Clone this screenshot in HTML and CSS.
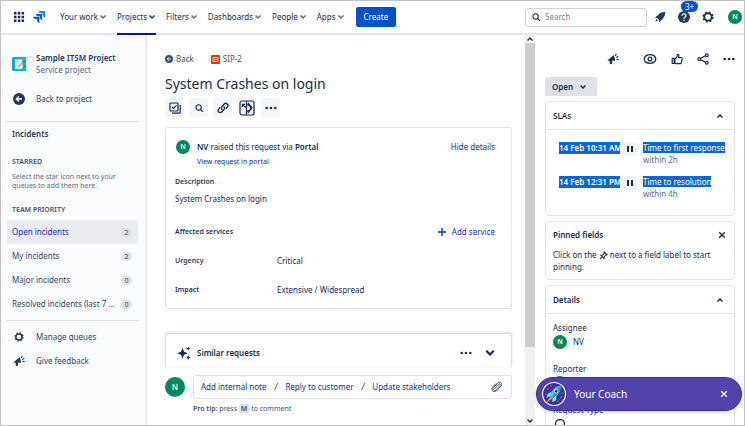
FILE: index.html
```html
<!DOCTYPE html>
<html lang="en">
<head>
<meta charset="utf-8">
<title>SIP-2 System Crashes on login</title>
<link rel="stylesheet" href="styles.css">
</head>
<body>
<svg class="sprite" aria-hidden="true">
  <symbol id="chev" viewBox="0 0 8 8"><path d="M1.5 2.5 4 5l2.500-2.500" fill="none" stroke="currentColor" stroke-width="1.500"/></symbol>
  <symbol id="chev-up" viewBox="0 0 8 8"><path d="M1.500 5.500 4 3l2.500 2.500" fill="none" stroke="currentColor" stroke-width="1.500"/></symbol>
  <symbol id="dots" viewBox="0 0 12 12"><g fill="currentColor"><circle cx="1.700" cy="6" r="1.300"/><circle cx="6" cy="6" r="1.300"/><circle cx="10.300" cy="6" r="1.300"/></g></symbol>
  <symbol id="search" viewBox="0 0 12 12"><g fill="none" stroke="currentColor" stroke-width="1.300"><circle cx="5.500" cy="5.300" r="3.200"/><path d="m8 8 2.700 2.700"/></g></symbol>
  <symbol id="gear" viewBox="0 0 12 12"><circle cx="6" cy="6" r="3.700" fill="none" stroke="currentColor" stroke-width="1.800"/><circle cx="6" cy="6" r="4.900" fill="none" stroke="currentColor" stroke-width="1.400" stroke-dasharray="2 1.850"/></symbol>
  <symbol id="horn" viewBox="0 0 12 12"><path d="M.3 7.400 6.800 2l1.500 5.800-3.200-.4-.3 3.900-2-.5-.2-3z" fill="currentColor"/><path d="m8.300 3 1-2M9.300 4.500l2-1.200M9.500 6.300l2.200.3" stroke="currentColor" stroke-width="1.200" fill="none"/></symbol>
  <symbol id="back" viewBox="0 0 12 12"><circle cx="6" cy="6" r="6" fill="currentColor"/><path d="M9 6H3.500M5.800 3.500 3.300 6l2.500 2.500" stroke="#fff" stroke-width="1.300" fill="none"/></symbol>
  <symbol id="close" viewBox="0 0 8 8"><path d="m1.200 1.200 5.600 5.600m0-5.600L1.200 6.800" stroke="currentColor" stroke-width="1.400"/></symbol>
</svg>
<div class="app">
  <header class="top">
    <button class="bare" aria-label="Switch apps"><svg class="i12" viewBox="0 0 12 12"><path d="M1 1h2.500v2.500H1zM4.800 1h2.500v2.500H4.800zM8.600 1h2.500v2.500H8.600zM1 4.800h2.500v2.500H1zM4.800 4.800h2.500v2.500H4.800zM8.600 4.800h2.500v2.500H8.600zM1 8.600h2.500v2.500H1zM4.800 8.600h2.500v2.500H4.800zM8.600 8.600h2.500v2.500H8.600z" fill="#172b4d"/></svg></button>
    <a class="logo" href="#" aria-label="Home"><svg class="i12" viewBox="0 0 12 12"><path d="M5.600 0H12v6.400a2.700 2.700 0 0 1-2.300-2.700V2.300H8.300A2.700 2.700 0 0 1 5.600 0z" fill="#2684ff"/><path d="M2.800 2.900h6.400v6.400a2.700 2.700 0 0 1-2.300-2.700V5.200H5.500a2.700 2.700 0 0 1-2.700-2.300z" fill="#0f5fe0"/><path d="M0 5.700h6.400V12a2.700 2.700 0 0 1-2.300-2.700V8H2.700A2.700 2.700 0 0 1 0 5.700z" fill="#0052cc"/></svg></a>
    <nav class="nav">
      <a href="#">Your work<svg class="i8"><use href="#chev"/></svg></a>
      <a href="#" class="on">Projects<svg class="i8"><use href="#chev"/></svg></a>
      <a href="#">Filters<svg class="i8"><use href="#chev"/></svg></a>
      <a href="#">Dashboards<svg class="i8"><use href="#chev"/></svg></a>
      <a href="#">People<svg class="i8"><use href="#chev"/></svg></a>
      <a href="#">Apps<svg class="i8"><use href="#chev"/></svg></a>
    </nav>
    <button class="create">Create</button>
    <label class="search"><svg class="i10"><use href="#search"/></svg><input type="search" placeholder="Search" aria-label="Search"></label>
    <div class="tools">
      <button class="bare" aria-label="Notifications"><svg class="i12" viewBox="0 0 12 12"><path d="M11.200 1C8 .8 5.500 2 3.900 4.200L.9 6.500l2.500.7L5 9l.5 2.200 2.700-3C10.300 6.500 11.300 4 11.200 1zM2.500 8 1.300 10.700 4 9.500z" fill="#253858"/></svg></button>
      <button class="bare help" aria-label="Help"><svg class="i12" viewBox="0 0 12 12"><circle cx="6" cy="6" r="6" fill="#253858"/><path d="M4 4.800c0-2.500 4-2.500 4 0C8 6.200 6 6 6 7.700M6 8.700v1.300" fill="none" stroke="#fff" stroke-width="1.200"/></svg><span class="badge">3+</span></button>
      <button class="bare" aria-label="Settings"><svg class="i12"><use href="#gear"/></svg></button>
      <button class="avatar" aria-label="Profile">N</button>
    </div>
  </header>

  <aside class="side">
    <div class="project">
      <svg class="i14" viewBox="0 0 14 14"><rect width="14" height="14" rx="1" fill="#00b3d7"/><path d="M3 2.500h7.500v9.300H3z" fill="#fff"/><path d="M4 4.500h4M4 6.300h3M4 8.200h2M4 10h4" stroke="#b3bac5" stroke-width=".6"/><path d="m10.800 3.200 1.200.8-4.500 6-1.500.8.300-1.700z" fill="#ff9c1a"/><path d="m10.800 3.200 1.200.8-.8 1-1.200-.8z" fill="#de350b"/></svg>
      <div><h2>Sample ITSM Project</h2><p>Service project</p></div>
    </div>
    <a class="side-link" href="#"><svg class="i12"><use href="#back"/></svg>Back to project</a>
    <hr>
    <h3>Incidents</h3>
    <h4>Starred</h4>
    <p class="hint">Select the star icon next to your queues to add them here.</p>
    <h4>Team priority</h4>
    <ul class="queues">
      <li><a href="#" class="on"><span>Open incidents</span><b>2</b></a></li>
      <li><a href="#"><span>My incidents</span><b>2</b></a></li>
      <li><a href="#"><span>Major incidents</span><b>0</b></a></li>
      <li><a href="#"><span>Resolved incidents (last 7 ...</span><b>0</b></a></li>
    </ul>
    <hr>
    <a class="side-link" href="#"><svg class="i10"><use href="#gear"/></svg>Manage queues</a>
    <a class="side-link" href="#"><svg class="i12"><use href="#horn"/></svg>Give feedback</a>
  </aside>

  <main class="main">
    <nav class="crumbs">
      <a href="#"><svg class="i8"><use href="#back"/></svg>Back</a>
      <a href="#" class="key"><svg class="i9" viewBox="0 0 9 9"><rect width="9" height="9" rx="1" fill="#de350b"/><path d="M2 2.500h5v4H2zM3 5.300l1.200-1.300.8.900L6 4" fill="none" stroke="#fff" stroke-width=".8"/></svg>SIP-2</a>
    </nav>
    <h1>System Crashes on login</h1>
    <div class="actions">
      <button aria-label="Create subtask"><svg class="i12" viewBox="0 0 12 12"><g fill="none" stroke="currentColor" stroke-width="1.200"><rect x="1" y="1" width="8" height="8" rx="1"/><path d="m3 4.800 1.500 1.600L7.500 3.300M3 11.200h7.200q1 0 1-1V3"/></g></svg></button>
      <button aria-label="Find similar"><svg class="i10"><use href="#search"/></svg></button>
      <button aria-label="Link issue"><svg class="i12" viewBox="0 0 12 12"><g fill="none" stroke="currentColor" stroke-width="1.300" stroke-linecap="round"><path d="M5 7.300A2.100 2.100 0 0 1 5 4.500L7.300 2a2.100 2.100 0 0 1 3 3L9.200 6.200"/><path d="M7 4.700a2.100 2.100 0 0 1 0 2.800L4.700 10a2.100 2.100 0 0 1-3-3l1.100-1.200"/></g></svg></button>
      <button aria-label="Add form"><svg class="i16" viewBox="0 0 16 16"><g fill="none" stroke="currentColor" stroke-width="1.200"><rect x="1" y="1" width="14" height="14" rx="2"/><path d="M7.500 1v4M7.500 11v4M7.500 5v6c5.500.8 5.500-6.800 0-6M3 4.500 7.500 8M3.300 7V4.300H6M9 3l4 4.800L9 13"/></g></svg></button>
      <button aria-label="More actions"><svg class="i12"><use href="#dots"/></svg></button>
    </div>

    <section class="card request">
      <div class="raised">
        <span class="avatar">N</span>
        <div class="who"><p><b>NV</b> raised this request via <b>Portal</b></p><a href="#">View request in portal</a></div>
        <button class="text-btn">Hide details</button>
      </div>
      <h5>Description</h5>
      <p class="desc">System Crashes on login</p>
      <div class="services"><h5>Affected services</h5><button class="text-btn"><svg class="i10" viewBox="0 0 10 10"><path d="M5 1v8M1 5h8" stroke="currentColor" stroke-width="1.400"/></svg>Add service</button></div>
      <dl><dt>Urgency</dt><dd>Critical</dd><dt>Impact</dt><dd>Extensive / Widespread</dd></dl>
    </section>

    <section class="similar">
      <svg class="i14" viewBox="0 0 14 14"><path d="M5.500 1.800 7 5.700 10.800 7.200 7 8.700l-1.500 3.900L4 8.700.2 7.200 4 5.700zM11.300.3l.7 1.600 1.700.7-1.700.7-.7 1.600-.7-1.600-1.600-.7 1.600-.7zM11.300 9.300l.7 1.500 1.500.7-1.500.7-.7 1.500-.7-1.500-1.500-.7 1.500-.7z" fill="currentColor"/></svg>
      <h2>Similar requests</h2>
      <button class="bare" aria-label="More"><svg class="i12"><use href="#dots"/></svg></button>
      <button class="bare" aria-label="Expand"><svg class="i12"><use href="#chev"/></svg></button>
    </section>

    <section class="reply">
      <span class="avatar big">N</span>
      <div class="box">
        <a href="#">Add internal note</a><i>/</i><a href="#">Reply to customer</a><i>/</i><a href="#">Update stakeholders</a>
        <button class="bare" aria-label="Attach file"><svg class="i12" viewBox="0 0 12 12"><path d="m3.500 7.500 4-4.300c1.200-1.100 2.400.2 1.400 1.300L5 8.800c-1.800 1.700-4-.3-2.400-2.200L6.800 2c2.500-2.300 5.300.7 3.200 3L5.900 9.600C3.300 12.300-.8 9.200 1.500 6.300L5 2.500" fill="none" stroke="#42526e" stroke-width="1"/></svg></button>
      </div>
      <p class="tip"><b>Pro tip:</b> press <kbd>M</kbd> to comment</p>
    </section>
  </main>

  <div class="scroll" aria-hidden="true">
    <svg class="i8"><use href="#chev-up"/></svg><span></span><svg class="i8"><use href="#chev"/></svg>
  </div>

  <aside class="detail">
    <div class="icons">
      <button class="bare horn" aria-label="Feedback"><svg class="i12"><use href="#horn"/></svg></button>
      <button class="bare" aria-label="Watch"><svg class="i14" viewBox="0 0 14 14"><g fill="none" stroke="currentColor" stroke-width="1.300"><ellipse cx="7" cy="7" rx="5.800" ry="4.400"/><circle cx="7" cy="7" r="1.900"/></g></svg></button>
      <button class="bare" aria-label="Like"><svg class="i12" viewBox="0 0 12 12"><path d="M1.200 5.300h2v5.200h-2zM3.800 10V6L6 4l.3-2.500c1.500-.6 2 .8 1.300 3h2.700q1 .2.800 1.300l-.8 4q-.2.800-1 .8H5z" fill="none" stroke="currentColor" stroke-width="1.200" stroke-linejoin="round"/></svg></button>
      <button class="bare" aria-label="Share"><svg class="i12" viewBox="0 0 12 12"><g fill="none" stroke="currentColor" stroke-width="1.200"><circle cx="2.200" cy="6" r="1.400"/><circle cx="9.800" cy="2.200" r="1.400"/><circle cx="9.800" cy="9.800" r="1.400"/><path d="m3.500 5.400 5-2.600M3.500 6.600l5 2.600"/></g></svg></button>
      <button class="bare" aria-label="More"><svg class="i12"><use href="#dots"/></svg></button>
    </div>
    <button class="status">Open<svg class="i8"><use href="#chev"/></svg></button>

    <section class="card">
      <h2 class="head">SLAs<button class="bare" aria-label="Collapse SLAs"><svg class="i8"><use href="#chev-up"/></svg></button></h2>
      <ul class="slas">
        <li><mark class="due">14 Feb 10:31 AM</mark><span class="pause"></span><p><mark>Time to first response</mark><br>within 2h</p></li>
        <li><mark class="due">14 Feb 12:31 PM</mark><span class="pause"></span><p><mark>Time to resolution</mark><br>within 4h</p></li>
      </ul>
    </section>

    <section class="card pinned">
      <h2>Pinned fields<button class="bare" aria-label="Dismiss"><svg class="i8"><use href="#close"/></svg></button></h2>
      <p>Click on the <svg class="i9" viewBox="0 0 10 10"><path d="m5.800 1 3.200 3.200-1.400.4-1.700 1.700-.3 2L2 4.700l2-.3 1.700-1.700zM3.700 6.300 1 9" fill="none" stroke="currentColor" stroke-width="1.200"/></svg> next to a field label to start pinning.</p>
    </section>

    <section class="card details">
      <h2 class="head">Details<button class="bare" aria-label="Collapse details"><svg class="i8"><use href="#chev-up"/></svg></button></h2>
      <dl>
        <dt>Assignee</dt><dd><span class="avatar">N</span>NV</dd>
        <dt>Reporter</dt><dd><span class="avatar">N</span>NV</dd>
        <dt>Request Type</dt><dd><svg class="i14" viewBox="0 0 14 14"><circle cx="7" cy="7" r="4.500" fill="none" stroke="currentColor" stroke-width="1.300"/></svg></dd>
      </dl>
    </section>
  </aside>

  <div class="coach">
    <svg class="i26" viewBox="0 0 26 26"><circle cx="13" cy="13" r="11.500" fill="#403294" stroke="#fff" stroke-width="1.200"/><g fill="#c0b6f2"><circle cx="7" cy="8" r=".6"/><circle cx="10" cy="5" r=".5"/><circle cx="20" cy="16" r=".6"/><circle cx="17" cy="20" r=".6"/><circle cx="5" cy="13" r=".5"/><circle cx="21" cy="12" r=".5"/></g><path d="M20 4.500c-4.500.3-8 3-9.700 7.500L9 16.500l2.500 1.200C16.500 15.500 20 10 20 4.500z" fill="#4fc3d9"/><path d="M20 4.500C15 8 12 12 11.500 17.700 16.500 15.500 20 10 20 4.500z" fill="#1d9fc0"/><path d="M10.700 10.500 6.500 13 5.500 17l4-2zM15.500 14.500l-.5 5-4 1.500.7-3.500z" fill="#79e2f2"/><path d="m9 16.500-3.500 5 5.500-3.700z" fill="#ffc400"/><circle cx="15.200" cy="10.200" r="1.900" fill="#253858" stroke="#fff" stroke-width=".8"/></svg>
    <span>Your Coach</span>
    <button class="bare" aria-label="Close coach"><svg class="i8"><use href="#close"/></svg></button>
  </div>
</div>
</body>
</html>
```
FILE: styles.css
```css
* { box-sizing: border-box; }
body { margin: 0; font: 8px/12px "Noto Sans", "Open Sans", sans-serif; color: #172b4d; background: #fff; }
h1, h2, h3, h4, h5, p, ul, dl, dd { margin: 0; padding: 0; }
h2, h3, h4, h5 { font-size: 8px; font-weight: 600; }
ul { list-style: none; }
a { color: inherit; text-decoration: none; }
b { font-weight: 600; }
svg { flex: none; display: block; }
button { font: inherit; color: inherit; border: 0; padding: 0; cursor: pointer; }
.bare, .text-btn { background: none; }
.sprite { position: absolute; width: 0; height: 0; }
.i8 { width: 8px; height: 8px; }
.i9 { width: 9px; height: 9px; }
.i10 { width: 10px; height: 10px; }
.i12 { width: 12px; height: 12px; }
.i14 { width: 14px; height: 14px; }
.i16 { width: 16px; height: 16px; }
.i26 { width: 26px; height: 26px; }

.app {
  position: relative;
  display: grid;
  grid-template: 34px minmax(0, 1fr) / 146px minmax(0, 1fr) 10px 209px;
  height: 100vh;
  border: 1px solid #c1c1c1;
  overflow: hidden;
}

.top { grid-column: 1 / -1; display: flex; align-items: center; padding: 0 2px 0 12px; border-bottom: 2px solid #e4e6ec; }
.logo { margin: 0 15px 0 8px; }
.nav { display: flex; align-self: stretch; gap: 10px; margin-bottom: -2px; }
.nav a { display: flex; align-items: center; gap: 1px; border-bottom: 2px solid transparent; }
.nav svg { color: #5e6c84; }
.nav .on { color: #0c2fa8; border-color: #0a1a9c; }
.nav .on svg { color: inherit; }
.create { height: 20px; padding: 0 8px; margin-left: 11px; border-radius: 2px; background: #0052cc; color: #fff; }
.search { display: flex; align-items: center; gap: 4px; width: 122px; height: 19px; margin-left: auto; padding: 0 5px; border: 1px solid #ccd0d9; border-radius: 3px; }
.search input { width: 100%; min-width: 0; padding: 0; border: 0; outline: 0; background: none; font: inherit; }
.search input::placeholder { color: #7a869a; }
.tools { display: flex; align-items: center; gap: 12px; margin-left: 7px; }
.help { position: relative; }
.badge { position: absolute; left: 3px; top: -10px; padding: 0 4px; border-radius: 6px; background: #0052cc; color: #fff; font-size: 8px; line-height: 11px; }
.avatar { flex: none; display: grid; place-items: center; width: 14px; height: 14px; border-radius: 50%; background: #00875a; color: #fff; font-size: 7px; font-weight: 600; }
.tools .avatar { margin-left: 2px; }
.avatar.big { width: 20px; height: 20px; font-size: 8px; }

.side { padding: 17px 6px 0 5px; border-right: 2px solid #ebecf0; background: #fafbfc; color: #344563; }
.side h2, .side h3 { color: #253858; }
.side hr { margin: 10px 0 6px; border: 0; border-top: 1px solid #dfe1e6; }
.project { display: flex; align-items: center; gap: 10px; padding-left: 6px; margin-bottom: 12px; }
.project p { color: #5e6c84; line-height: 11px; }
.side-link { display: grid; grid-template-columns: 14px 1fr; align-items: center; justify-items: start; gap: 10px; height: 24px; padding-left: 6px; }
.side-link svg { justify-self: center; color: #253858; }
.side h3, .side h4, .hint { padding-left: 6px; }
.side h4 { margin-top: 16px; font-size: 7px; line-height: 12px; text-transform: uppercase; color: #42526e; }
.hint { margin-top: 4px; font-size: 7px; line-height: 9px; color: #5e6c84; }
.hint + h4 { margin-top: 14px; }
.queues { margin: 4px 1px 0; }
.queues a { display: flex; align-items: center; justify-content: space-between; height: 24px; padding: 0 6px 0 5px; border-radius: 2px; }
.queues .on { background: #ebecf0; color: #0c2fa8; }
.queues b { min-width: 11px; border-radius: 5px; background: #dfe1e6; color: #344563; font-size: 7px; font-weight: 400; line-height: 9px; text-align: center; }
.queues + hr { margin: 4px 0; }

.main { display: flex; flex-direction: column; padding: 18px 13px 0 18px; overflow: hidden; }
.crumbs { display: flex; gap: 17px; color: #42526e; }
.crumbs a { display: flex; align-items: center; gap: 3px; }
h1 { margin-top: 9px; font-size: 14px; line-height: 20px; font-weight: 400; }
.actions { display: flex; gap: 5px; margin-top: 4px; }
.actions button { display: grid; place-items: center; width: 19px; height: 19px; border-radius: 2px; background: #f4f5f7; }
.card { border: 1px solid #e2e4e9; border-radius: 3px; }
.request { margin-top: 10px; padding: 12px 16px 12px 9px; }
.raised { display: flex; align-items: flex-start; gap: 7px; padding-left: 1px; line-height: 14px; }
.who { flex: 1; }
.who a { display: block; font-size: 7px; line-height: 16px; color: #0c2fa8; }
.text-btn { display: flex; align-items: center; gap: 5px; line-height: 14px; color: #0c2fa8; }
h5 { font-size: 7px; line-height: 12px; color: #253858; }
.request > h5 { margin-top: 6px; }
.desc { margin-top: 5px; }
.services { display: flex; align-items: center; justify-content: space-between; margin-top: 20px; }
.request dl { display: grid; grid-template-columns: 102px 1fr; row-gap: 17px; margin-top: 16px; }
.request dt { font-size: 7px; font-weight: 600; color: #253858; }
.similar { display: flex; align-items: center; gap: 12px; height: 34px; margin-top: 24px; padding: 4px 15px 0 11px; border: 1px solid #dcd9f2; border-bottom: 0; border-radius: 3px 3px 0 0; box-shadow: 0 -1px 3px #dcd9f2; }
.similar h2 { flex: 1; margin-left: -6px; }
.reply { display: grid; grid-template-columns: 20px 1fr; align-items: center; column-gap: 8px; margin-top: 8px; }
.box { display: flex; align-items: center; gap: 8px; height: 24px; padding: 0 8px 0 7px; border: 1px solid #dfe1e6; border-radius: 3px; color: #0c2fa8; }
.box i { color: #172b4d; }
.box button { margin-left: auto; }
.tip { grid-column: 2; margin-top: 4px; font-size: 7px; color: #42526e; }
kbd { padding: 0 2px; border-radius: 2px; background: #dfe1e6; font: inherit; font-weight: 600; }

.scroll { display: flex; flex-direction: column; justify-content: space-between; align-items: center; background: #f0f0f0; color: #333; }
.scroll span { flex: none; width: 100%; height: 78%; margin-bottom: auto; background: #cdcdcd; }

.detail { padding: 17px 9px 0 10px; overflow: hidden; }
.icons { display: flex; justify-content: flex-end; align-items: center; gap: 14px; height: 14px; }
.icons .horn { margin-right: 10px; }
.status { display: flex; align-items: center; gap: 6px; height: 19px; margin: 11px 0 5px; padding: 0 10px 0 7px; border-radius: 2px; background: #dfe1e6; font-weight: 600; }
.detail .card { margin-bottom: 5px; }
.detail h2 { display: flex; align-items: center; justify-content: space-between; }
.head { height: 28px; padding: 0 10px 0 7px; border-bottom: 1px solid #e2e4e9; }
.slas { padding: 12px 8px 15px 13px; }
.slas li { display: grid; grid-template-columns: 61px 14px 1fr; column-gap: 3px; align-items: start; margin-bottom: 10px; }
.slas li:last-child { margin-bottom: 0; }
.slas p { margin-left: 3px; color: #5e6c84; white-space: nowrap; }
mark { background: #0b66cf; color: #fff; }
.due { font-weight: 600; line-height: 12px; white-space: nowrap; text-align: right; }
.pause { display: flex; justify-content: center; gap: 2px; height: 14px; padding: 4px 0; background: #f4f5f7; border-radius: 2px; }
.pause::before, .pause::after { content: ""; width: 2px; background: #172b4d; }
.pinned { padding: 7px 8px 6px 7px; }
.pinned p { margin-top: 8px; }
.pinned p svg { display: inline; vertical-align: -2px; }
.details dl { padding: 8px 7px; }
.details dt { line-height: 12px; }
.details dd { display: flex; align-items: center; gap: 6px; height: 14px; margin: 1px 0 14px; }

.coach { position: absolute; right: 2px; bottom: 14px; display: flex; align-items: center; gap: 7px; width: 206px; height: 34px; padding: 0 13px 0 4px; border: 1px solid #403294; border-radius: 17px; background: #5243aa; color: #fff; font-size: 10px; box-shadow: 0 1px 3px #091e4240; }
.coach span { flex: 1; }
```
